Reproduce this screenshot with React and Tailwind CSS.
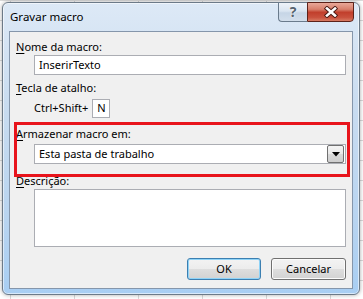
import React from 'react'

const font = { fontFamily: '"Noto Sans", "Open Sans", sans-serif' }

const Label = ({ accel, rest, className = '' }) => (
  <div className={`ml-[6px] h-[16px] text-[11px] leading-[16px] text-black ${className}`}>
    <span className="underline underline-offset-[2px]">{accel}</span>
    {rest}
  </div>
)

const CaptionButtons = () => (
  <div className="absolute top-[-1px] right-[5px] flex h-[20px]">
    <div className="w-[29px] h-full flex items-center justify-center rounded-bl-[4px] border border-r-0 border-[#6a7b8c] bg-[linear-gradient(to_bottom,#eef3f9_0%,#dae5f1_45%,#c6d5e6_55%,#d3dfec_100%)]">
      <span className="text-[14px] font-bold leading-none text-[#56636f] [text-shadow:0_0_1px_#ffffff,0_0_2px_#ffffff]">?</span>
    </div>
    <div className="w-[47px] h-full flex items-center justify-center rounded-br-[4px] border border-[#5c2219] bg-[linear-gradient(to_bottom,#e9a898_0%,#d8806c_35%,#c13f2c_52%,#c9513d_80%,#d77a62_100%)]">
      <svg width="16" height="12" viewBox="0 0 16 12">
        <path d="M4 2.5 L12 9.5 M12 2.5 L4 9.5" stroke="#4a1a13" strokeWidth="4.4" strokeLinecap="square" />
        <path d="M4 2.5 L12 9.5 M12 2.5 L4 9.5" stroke="#ffffff" strokeWidth="2.6" strokeLinecap="square" />
      </svg>
    </div>
  </div>
)

const Button = ({ children, primary }) => (
  <div
    className={`h-[22px] flex items-center justify-center rounded-[3px] border text-[11px] text-black bg-[linear-gradient(to_bottom,#f3f3f3_0%,#ececec_50%,#dedede_50%,#d2d2d2_100%)] ${
      primary
        ? 'w-[74px] border-[#3c7fb1] shadow-[inset_0_0_0_1px_#8fd3f7]'
        : 'w-[75px] border-[#707070] shadow-[inset_0_0_0_1px_#fbfbfb]'
    }`}
  >
    {children}
  </div>
)

export default function App() {
  return (
    <div
      style={font}
      className="w-[363px] h-[299px] overflow-hidden pl-[2px] pt-[2px] bg-white bg-[linear-gradient(to_right,#dadada_1px,transparent_1px),linear-gradient(to_bottom,#dadada_1px,transparent_1px)] [background-size:64px_20px] [background-position:10px_0px]"
    >
      <div className="relative w-[358px] h-[293px] flex flex-col px-[6px] pb-[5px] rounded-[6px] border border-[#6c7a88] bg-[linear-gradient(to_bottom,#dde9f6_0%,#c9dcf0_35%,#b8d4f0_75%,#a8cef3_100%)] shadow-[0_0_4px_rgba(0,0,0,0.35),inset_0_0_0_1px_rgba(255,255,255,0.55)]">
        <div className="h-[28px] flex items-center pl-[1px] pb-[1px] text-[11.5px] text-black">
          Gravar macro
        </div>
        <CaptionButtons />

        <div className="relative flex-1 flex flex-col border border-[#8596ab] bg-[#f0f0f0]">
          <Label accel="N" rest="ome da macro:" className="mt-[7px]" />
          <div className="ml-[24px] w-[312px] h-[20px] flex items-center pl-[4px] border border-[#abadb3] bg-white text-[11px] text-black">
            InserirTexto
          </div>

          <Label accel="T" rest="ecla de atalho:" className="mt-[5px]" />
          <div className="ml-[24px] mt-[3px] h-[19px] flex items-center gap-[4px] text-[11px] text-black">
            <span>Ctrl+Shift+</span>
            <div className="w-[18px] h-[19px] flex items-center justify-center border border-[#abadb3] bg-white">
              N
            </div>
          </div>

          <Label accel="A" rest="rmazenar macro em:" className="mt-[8px]" />
          <div className="ml-[24px] mt-[2px] w-[312px] h-[20px] flex items-center justify-between pl-[4px] pr-[1px] border border-[#abadb3] bg-white text-[11px] text-black">
            <span>Esta pasta de trabalho</span>
            <div className="w-[17px] h-[18px] flex items-center justify-center rounded-[2px] border border-[#707070] bg-[linear-gradient(to_bottom,#f4f4f4_0%,#e8e8e8_50%,#d9d9d9_50%,#cdcdcd_100%)]">
              <svg width="8" height="5" viewBox="0 0 8 5">
                <path d="M0 0 H8 L4 4.5 Z" fill="#000000" />
              </svg>
            </div>
          </div>

          <Label accel="D" rest="escrição:" className="mt-[9px]" />
          <div className="ml-[24px] w-[312px] h-[58px] border border-[#abadb3] bg-white" />

          <div className="mt-[11px] mr-[6px] flex justify-end gap-[10px]">
            <Button primary>OK</Button>
            <Button>Cancelar</Button>
          </div>

          <div className="absolute left-[4px] top-[90px] w-[336px] h-[55px] border-[3px] border-[#e8141c] pointer-events-none" />
        </div>
      </div>
    </div>
  )
}
